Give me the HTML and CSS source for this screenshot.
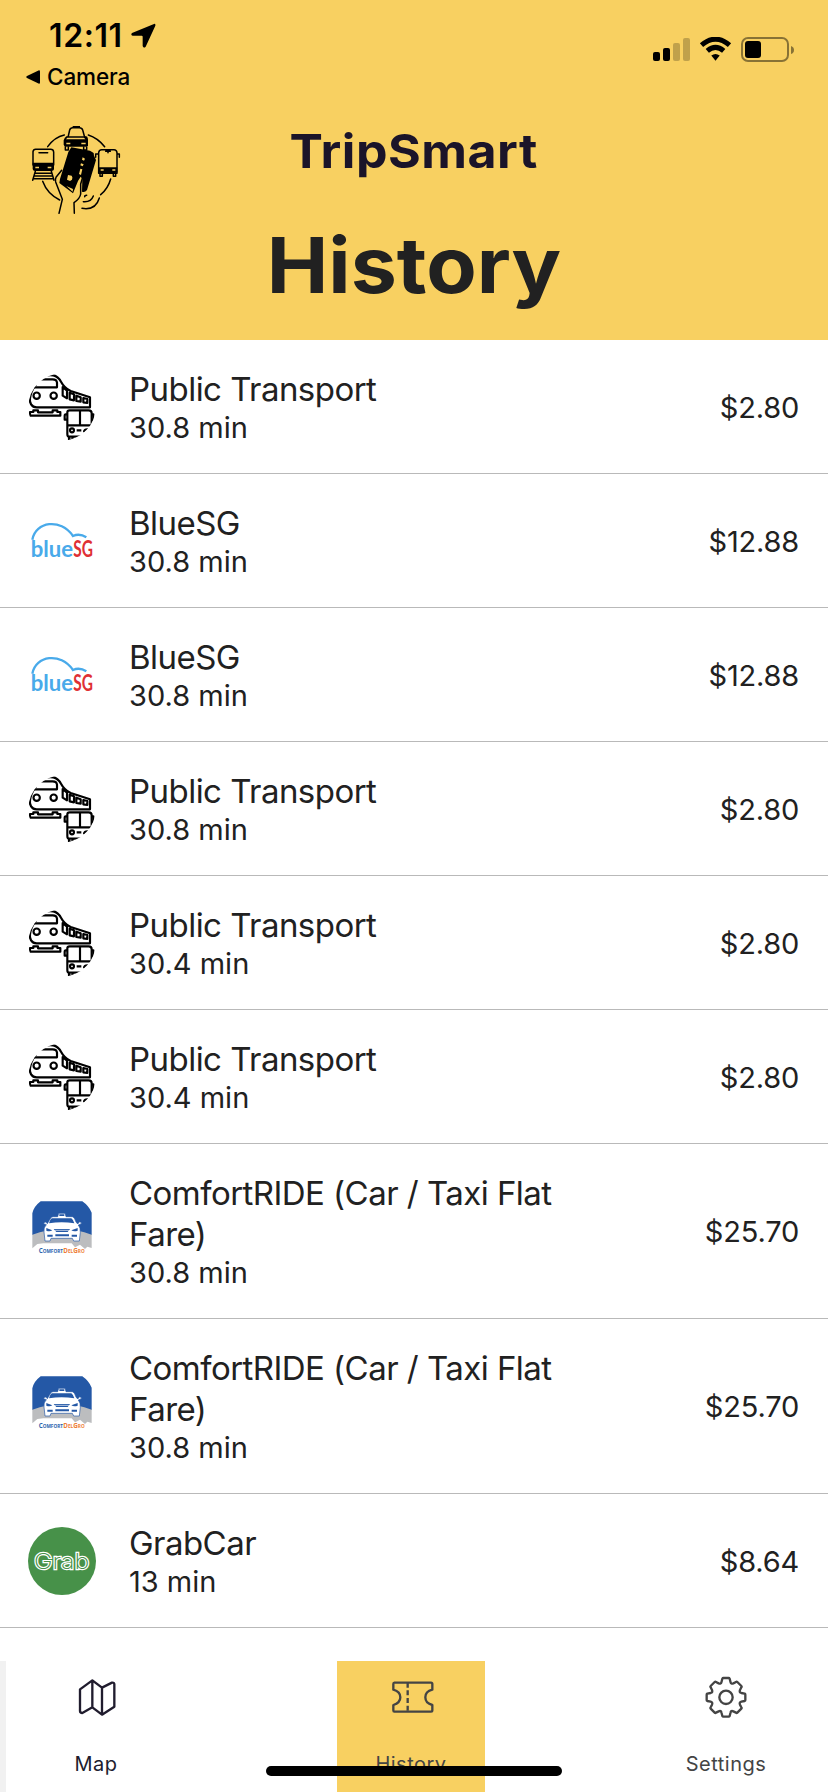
FILE: index.html
```html
<!DOCTYPE html>
<html lang="en">
<head>
<meta charset="utf-8">
<title>TripSmart – History</title>
<link rel="stylesheet" href="styles.css">
</head>
<body>
<svg class="defs" width="0" height="0" aria-hidden="true">
  <symbol id="transit" viewBox="24 24 204 204">
    <clipPath id="round"><circle cx="126" cy="126" r="101"/></clipPath>
    <g clip-path="url(#round)" fill="none" stroke="#000" stroke-width="6.500" stroke-linejoin="round">
      <path d="M55 38Q80 28 100 31Q114 34 123 50Q133 69 152 78L210 97V127H50C34 127 28 112 30 100C31 86 38 72 48 58"/>
      <path d="M40 67H111V53Q110 43 98 43H54"/>
      <circle cx="50" cy="92" r="9.500"/><circle cx="101" cy="92" r="9.500"/>
      <path d="M128 66L141 77V100L128 92ZM149 83L162 88V106L149 103ZM169 92L182 97V110L169 108ZM190 99L202 102V114L190 112Z"/>
      <path d="M30 152V141H40V136H54V142H98V136H112V141H121V152Z"/>
      <path d="M142 181V142Q142 136 149 136H206Q215 136 215 145V181M142 181V207Q142 215 147 215H190M142 181H215M180 136V181"/>
      <path d="M142 148H137Q134 148 134 153V164H142M215 148H220V164H215"/>
      <circle cx="156" cy="196" r="6"/><path d="M170 196H184M192 202Q192 192 204 193M147 215V224H158V215"/>
    </g>
  </symbol>
  <symbol id="bluesg" viewBox="54 21 204 204">
    <path d="M67 119C77 65 151 53 189 108Q209 99 229 112" fill="none" stroke="#49aaea" stroke-width="7"/>
    <text x="62" y="171" textLength="127" lengthAdjust="spacingAndGlyphs" class="mark mark-blue">blue</text>
    <text x="190" y="171" textLength="59" lengthAdjust="spacingAndGlyphs" class="mark mark-red">SG</text>
  </symbol>
  <symbol id="comfort" viewBox="84 111 204 204">
    <path d="M97 222Q185 180 275 222V264L262 260L255 267L240 254L225 262L215 250H130L112 252L97 265Z" fill="#bcbdbf"/>
    <path d="M97 224V160Q101 140 122 124H247Q267 138 275 158V224Q187 190 97 224Z" fill="#2458a6"/>
    <path d="M173 170L176 160H195L198 170H217Q224 171 228 186L233 192L239 185Q247 187 243 192L235 195Q242 203 241 217L238 243H221L217 235H153L150 243H135L132 216Q130 203 139 194L131 191Q132 185 138 186L142 191L152 174Q155 170 160 170Z" fill="#fff" stroke="#2458a6" stroke-width="2"/>
    <path d="M156 175H214Q219 178 223 190Q185 184 147 190Q151 177 156 175ZM178 163H193V168H178ZM139 204L157 211Q149 216 139 212ZM233 204L214 211Q222 216 233 212ZM161 207H210L203 216H169ZM142 224H158V230H142ZM166 223H207V229H166ZM215 224H231V230H215Z" fill="#2458a6"/>
    <path d="M164 211H207" stroke="#fff" stroke-width="2"/>
    <text x="116" y="278" textLength="73" lengthAdjust="spacingAndGlyphs" class="delgro delgro-blue">Comfort</text>
    <text x="190" y="278" textLength="64" lengthAdjust="spacingAndGlyphs" class="delgro delgro-orange">DelGro</text>
  </symbol>
  <symbol id="grab" viewBox="84 81 204 204">
    <circle cx="186" cy="183" r="102" fill="#479149"/>
    <text x="102" y="208" textLength="166" lengthAdjust="spacingAndGlyphs" class="grab-mark">Grab</text>
  </symbol>
</svg>

<header class="header">
  <div class="status">
    <div class="status-left">
      <div class="clock"><span>12:11</span>
        <svg class="arrow" width="26" height="26" viewBox="392 70 78 78"><path d="M461 73Q466 71 465 78L436 141Q430 147 427 139V111Q427 108 424 108H397Q390 106 395 100Z"/></svg>
      </div>
      <div class="back"><svg width="14" height="14" viewBox="0 0 14 14"><path d="M12.500.4Q14 0 14 1.500V12.500Q14 14 12.500 13.600L1 8Q-.5 7 1 6Z"/></svg><span>Camera</span></div>
    </div>
    <svg class="status-right" width="144" height="28" viewBox="0 0 144 28">
      <rect x="1" y="15" width="7" height="9" rx="2"/><rect x="11" y="11" width="7" height="13" rx="2"/>
      <g opacity=".22"><rect x="21" y="6" width="7" height="18" rx="2"/><rect x="31" y="1" width="7" height="23" rx="2"/></g>
      <g fill="none" stroke="#000" stroke-width="5"><path d="M49.500 8.200Q63.500-3.800 77.500 8.200M55.300 13.800Q63.500 6.800 71.700 13.800"/></g>
      <path d="M59.300 18.600Q63.500 15.200 67.700 18.600L63.500 23.800Z"/>
      <rect x="90" y="1" width="46" height="23" rx="6" fill="none" stroke="#000" stroke-opacity=".45" stroke-width="2"/>
      <rect x="93" y="4" width="16" height="17" rx="3"/><path d="M139 9Q142 10 142 13T139 17Z" opacity=".45"/>
    </svg>
  </div>
  <div class="brand">
    <svg class="logo" width="96" height="96" viewBox="30 30 288 288">
      <g fill="none" stroke="#000" stroke-width="4.500" stroke-linejoin="round" stroke-linecap="round">
        <path d="M83 110Q104 81 133 75M205 75Q233 84 254 110M68 214Q82 252 119 270M272 207Q264 236 242 254"/>
        <path d="M145 78L149 60Q151 53 158 53H178Q186 53 188 60L193 78M139 82H145M193 82H200M136 110V120H145V111M191 111V120H200V111"/>
        <path d="M39 165V125Q40 118 47 118H92Q100 118 101 126V165M57 128H83M46 184L38 211M94 184L102 211M45 190H96M43 198H98M40 206H101"/>
        <path d="M236 190V128Q237 119 245 119H282Q290 119 291 128V190ZM257 124H271M264 120V128M236 132H227V142M291 132H298V142M240 192V199H247V192M280 192V199H287V192"/>
        <path d="M125 181L108 202Q105 207 107 216L127 268L117 310M188 202L182 222V252Q180 266 162 278L163 310M194 260Q194 256 200 256M190 275Q213 277 220 258M186 295Q227 302 238 264"/>
      </g>
      <path d="M158 48H180V54H158ZM141 79H197Q205 82 204 92V108Q200 111 196 110H142Q132 111 131 104V91Q133 82 141 79ZM38 158H102V178Q101 183 95 183H45Q39 183 38 177ZM235 172H292V186Q291 189 286 189H242Q236 189 235 185Z"/>
      <path d="M154 112L210 122L221 129L222 137L228 150L201 240Q195 248 186 245L187 206L182 200L174 213L159 250L118 219L120 207L145 126Z"/>
      <g fill="#f8d061"><path d="M142 83H192L196 88H138ZM139 98H151V103H139ZM184 98H197V103H184ZM46 170H57V175H46ZM83 170H94V175H83ZM242 178H251V182H242ZM277 178H286V182H277ZM144 195L155 197Q159 202 156 209L150 213L141 209ZM188 142L195 146L192 152L186 149ZM183 160L191 163L188 169L181 166ZM181 176L187 178L183 195L177 192ZM139 228L159 237L158 245Z"/></g>
    </svg>
    <div class="app-name">TripSmart</div>
  </div>
  <h1 class="page-title">History</h1>
</header>

<main class="trips">
  <div class="trip"><svg class="trip-icon"><use href="#transit"/></svg><div class="trip-text"><div class="trip-name">Public Transport</div><div class="trip-time">30.8 min</div></div><div class="fare">$2.80</div></div>
  <div class="trip"><svg class="trip-icon"><use href="#bluesg"/></svg><div class="trip-text"><div class="trip-name">BlueSG</div><div class="trip-time">30.8 min</div></div><div class="fare">$12.88</div></div>
  <div class="trip"><svg class="trip-icon"><use href="#bluesg"/></svg><div class="trip-text"><div class="trip-name">BlueSG</div><div class="trip-time">30.8 min</div></div><div class="fare">$12.88</div></div>
  <div class="trip"><svg class="trip-icon"><use href="#transit"/></svg><div class="trip-text"><div class="trip-name">Public Transport</div><div class="trip-time">30.8 min</div></div><div class="fare">$2.80</div></div>
  <div class="trip"><svg class="trip-icon"><use href="#transit"/></svg><div class="trip-text"><div class="trip-name">Public Transport</div><div class="trip-time">30.4 min</div></div><div class="fare">$2.80</div></div>
  <div class="trip"><svg class="trip-icon"><use href="#transit"/></svg><div class="trip-text"><div class="trip-name">Public Transport</div><div class="trip-time">30.4 min</div></div><div class="fare">$2.80</div></div>
  <div class="trip"><svg class="trip-icon"><use href="#comfort"/></svg><div class="trip-text"><div class="trip-name">ComfortRIDE (Car / Taxi Flat Fare)</div><div class="trip-time">30.8 min</div></div><div class="fare">$25.70</div></div>
  <div class="trip"><svg class="trip-icon"><use href="#comfort"/></svg><div class="trip-text"><div class="trip-name">ComfortRIDE (Car / Taxi Flat Fare)</div><div class="trip-time">30.8 min</div></div><div class="fare">$25.70</div></div>
  <div class="trip"><svg class="trip-icon"><use href="#grab"/></svg><div class="trip-text"><div class="trip-name">GrabCar</div><div class="trip-time">13 min</div></div><div class="fare">$8.64</div></div>
</main>

<nav class="tabs">
  <a class="tab tab-map">
    <svg class="tab-icon" viewBox="222 525 132 132"><path d="M240 568L277 541L306 563L336 548Q343 547 343 553V620L306 644L277 622L247 639Q240 639 240 633ZM277 541V622M306 563V644"/></svg>
    <span>Map</span>
  </a>
  <a class="tab tab-active">
    <svg class="tab-icon" viewBox="417 106 132 132"><path d="M433 129H543Q547 129 547 133V150Q526 155 526 173T547 196V212Q547 216 543 216H433Q430 216 430 212V196Q451 190 451 173T430 150V133Q430 129 433 129Z"/><path d="M473 129V216" stroke-dasharray="15 8"/></svg>
    <span>History</span>
  </a>
  <a class="tab">
    <svg class="tab-icon" viewBox="192 105 132 132"><circle cx="258" cy="172" r="20"/><path d="M244.500 126L247 116Q248 114 250 114H266Q268 114 269 116L271.500 126Q273 133 280 130L288 126Q290 124 292 126L304 138Q306 140 304 142L300 150Q297 157 304 159L314 161Q316 162 316 164V180Q316 182 314 183L304 185Q297 187 300 194L304 202Q306 204 304 206L292 218Q290 220 288 218L280 214Q273 211 271.500 218L269 228Q268 230 266 230H250Q248 230 247 228L244.500 218Q243 211 236 214L228 218Q226 220 224 218L212 206Q210 204 212 202L216 194Q219 187 212 185L202 183Q200 182 200 180V164Q200 162 202 161L212 159Q219 157 216 150L212 142Q210 140 212 138L224 126Q226 124 228 126L236 130Q243 133 244.500 126Z"/></svg>
    <span>Settings</span>
  </a>
  <div class="home-indicator"></div>
</nav>
</body>
</html>
```
FILE: styles.css
```css
* { box-sizing: border-box; }
body {
  margin: 0;
  width: 828px;
  height: 1792px;
  overflow: hidden;
  display: flex;
  flex-direction: column;
  background: #fff;
  color: #212121;
  font-family: Inter, "Liberation Sans", sans-serif;
}
svg { display: block; flex: none; }
.defs { position: absolute; }

.header { height: 340px; flex: none; background: #f8d061; }
.status { height: 120px; display: flex; justify-content: space-between; padding: 16px 32px 0 26px; color: #000; }
.clock { display: flex; align-items: center; gap: 8px; padding-left: 23px; height: 40px; font-size: 32px; font-weight: 600; line-height: 40px; letter-spacing: .6px; }
.back { display: flex; align-items: center; gap: 7px; height: 42px; font-size: 22.5px; font-weight: 500; line-height: 42px; }
.back span { letter-spacing: -.1px; }
.status-right { margin-top: 21px; }
.brand { height: 101px; display: grid; grid-template-columns: 96px 1fr 96px; padding: 0 30px; }
.app-name { justify-self: center; font-size: 47px; font-weight: 700; line-height: 61px; color: #1b1429; letter-spacing: .5px; transform: scaleX(1.065); }
.page-title { margin: 0; text-align: center; font-size: 77px; font-weight: 700; line-height: 88px; transform: scaleX(1.07); }

.trips { flex: none; }
.trip { display: flex; align-items: center; padding: 29px 29px 27px 28px; border-bottom: 1px solid #b9b9b9; }
.trip-icon { width: 68px; height: 68px; margin: -2px 33px 0 0; }
.trip-text { width: 450px; }
.trip-name { font-size: 33px; line-height: 41px; letter-spacing: -.54px; }
.trip-time { font-size: 29px; line-height: 36px; }
.fare { margin-left: auto; font-size: 29px; line-height: 36px; letter-spacing: -.2px; }

.mark { font: 700 66px Lato, sans-serif; }
.mark-blue { fill: #49aaea; }
.mark-red { fill: #df3034; }
.delgro { font: 700 20px "Open Sans", sans-serif; font-variant: small-caps; }
.delgro-blue { fill: #2b62ad; }
.delgro-orange { fill: #ee7d35; }
.grab-mark { font: 200 66px Inter, sans-serif; fill: #479149; stroke: #fff; stroke-width: 7px; paint-order: stroke; }

.tabs { position: relative; flex: none; height: 131px; margin-top: 33px; display: flex; justify-content: space-between; padding: 0 28px 0 16px; border-left: 6px solid #f1f1f1; }
.tab { width: 148px; height: 131px; padding-top: 14px; display: flex; flex-direction: column; align-items: center; gap: 30px; color: #444; font-size: 20px; line-height: 30px; letter-spacing: .5px; }
.tab-map { color: #201c2e; }
.tab-active { background: #f8d061; }
.tab-icon { width: 44px; height: 44px; overflow: visible; fill: none; stroke: currentColor; stroke-width: 7px; stroke-linejoin: round; }
.home-indicator { position: absolute; left: 260px; bottom: 16px; width: 296px; height: 10px; border-radius: 5px; background: #000; }
```
